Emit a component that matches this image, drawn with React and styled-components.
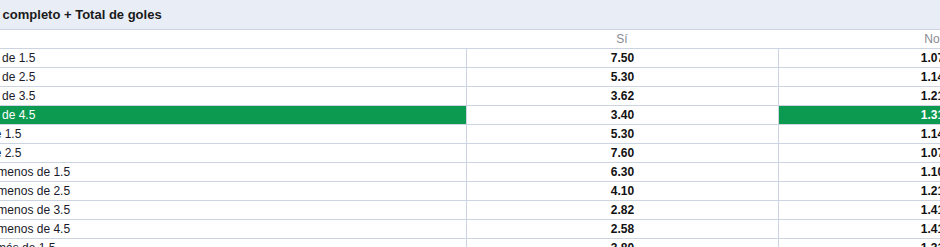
import React from "react";
import styled, { createGlobalStyle } from "styled-components";

const Global = createGlobalStyle`
  html, body { margin: 0; padding: 0; background: #ffffff; }
  body { font-family: "Liberation Sans", Arial, sans-serif; }
`;

const Viewport = styled.div`
  width: 940px;
  height: 247px;
  overflow: hidden;
  background: #ffffff;
`;

const Market = styled.div`
  width: 1158px;
  margin-left: -72px;
`;

const Title = styled.div`
  height: 29px;
  line-height: 29px;
  padding-left: 25px;
  background: #e9edf6;
  border-bottom: 1px solid #ccd4e1;
  font-size: 13px;
  font-weight: 700;
  color: #1a1a1a;
  white-space: nowrap;
`;

const Row = styled.div`
  display: grid;
  grid-template-columns: 538px 312px 308px;
  height: 19px;
  box-sizing: border-box;
  border-bottom: 1px solid #ccd4e1;
`;

const HeadCell = styled.div`
  line-height: 18px;
  font-size: 12px;
  color: #8a8a92;
  text-align: center;
`;

const Label = styled.div`
  line-height: 18px;
  padding-left: 6.67px;
  font-size: 12px;
  white-space: nowrap;
  overflow: hidden;
  color: ${(p) => (p.$active ? "#ffffff" : "#1a1a2a")};
  background: ${(p) => (p.$active ? "#0b9a50" : "transparent")};
`;

const Odd = styled.div`
  box-sizing: border-box;
  border-left: 1px solid #ccd4e1;
  line-height: 18px;
  font-size: 12px;
  font-weight: 700;
  text-align: center;
  white-space: nowrap;
  color: ${(p) => (p.$active ? "#ffffff" : "#111111")};
  background: ${(p) => (p.$active ? "#0b9a50" : "transparent")};
`;

const rows = [
  { label: "Local y más de 1.5", yes: "7.50", no: "1.07" },
  { label: "Local y más de 2.5", yes: "5.30", no: "1.14" },
  { label: "Local y más de 3.5", yes: "3.62", no: "1.21" },
  { label: "Local y más de 4.5", yes: "3.40", no: "1.31", pick: true },
  { label: "1X y más de 1.5", yes: "5.30", no: "1.14" },
  { label: "1X y más de 2.5", yes: "7.60", no: "1.07" },
  { label: "Local o X y menos de 1.5", yes: "6.30", no: "1.10" },
  { label: "Local o X y menos de 2.5", yes: "4.10", no: "1.21" },
  { label: "Local o X y menos de 3.5", yes: "2.82", no: "1.41" },
  { label: "Local o X y menos de 4.5", yes: "2.58", no: "1.41" },
  { label: "Local o 2 y más de 1.5", yes: "3.80", no: "1.31" },
];

export default function App() {
  return (
    <>
      <Global />
      <Viewport>
        <Market>
          <Title>Tiempo completo + Total de goles</Title>
          <Row>
            <HeadCell />
            <HeadCell>Sí</HeadCell>
            <HeadCell>No</HeadCell>
          </Row>
          {rows.map((r) => (
            <Row key={r.label}>
              <Label $active={r.pick}>{r.label}</Label>
              <Odd>{r.yes}</Odd>
              <Odd $active={r.pick}>{r.no}</Odd>
            </Row>
          ))}
        </Market>
      </Viewport>
    </>
  );
}
